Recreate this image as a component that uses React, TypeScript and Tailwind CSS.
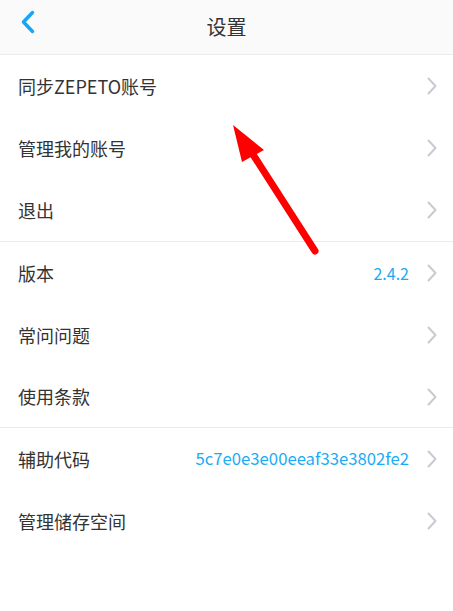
import React from 'react';

interface RowProps {
  label: string;
  value?: string;
  wide?: boolean;
  short?: boolean;
}

const ChevronRight = () => (
  <svg width="10" height="18" viewBox="0 0 10 18" className="shrink-0">
    <polyline points="1.5,1.5 8.5,9 1.5,16.5" fill="none" stroke="#c7ccd3" strokeWidth="2" strokeLinecap="round" strokeLinejoin="round" />
  </svg>
);

const Row: React.FC<RowProps> = ({ label, value, wide, short }) => (
  <div className={`flex items-center justify-between pl-[18px] pr-[16px] ${short ? 'h-[61px]' : 'h-[62px]'}`}>
    <div className="text-[18px] text-[#333333]">{label}</div>
    <div className="flex items-center gap-[18px]">
      {value && (
        <div className={wide ? 'text-[16.7px] text-[#1aabf5]' : 'text-[16px] text-[#1aabf5]'}>{value}</div>
      )}
      <ChevronRight />
    </div>
  </div>
);

const App: React.FC = () => {
  return (
    <div
      className="relative h-[611px] w-[453px] overflow-hidden bg-white"
      style={{ fontFamily: '"Noto Sans CJK SC", "Noto Sans", sans-serif' }}
    >
      {/* Header */}
      <div className="relative flex h-[55px] items-center justify-center border-b border-[#ebebeb] bg-[#fafafa]">
        <div className="absolute left-[20px] top-[10px]">
          <svg width="16" height="24" viewBox="0 0 16 24">
            <polyline points="12.5,2.5 3.5,12 12.5,21.5" fill="none" stroke="#15a6f5" strokeWidth="3.5" strokeLinecap="round" strokeLinejoin="round" />
          </svg>
        </div>
        <div className="text-[20px] text-[#333333]">设置</div>
      </div>

      {/* Account group */}
      <Row label="同步ZEPETO账号" />
      <Row label="管理我的账号" />
      <Row label="退出" />
      <div className="h-px bg-[#e8eaee]" />

      {/* Info group */}
      <Row label="版本" value="2.4.2" />
      <Row label="常问问题" />
      <Row label="使用条款" short />
      <div className="h-px bg-[#e8eaee]" />

      <Row label="辅助代码" value="5c7e0e3e00eeaf33e3802fe2" wide />
      <Row label="管理储存空间" />

      {/* Annotation arrow */}
      <svg className="pointer-events-none absolute left-0 top-0" width="453" height="611" viewBox="0 0 453 611">
        <line x1="315" y1="251" x2="252" y2="153" stroke="#ff0000" strokeWidth="7" strokeLinecap="round" />
        <polygon points="233,125 264,150 242,162" fill="#ff0000" />
      </svg>
    </div>
  );
};

export default App;
